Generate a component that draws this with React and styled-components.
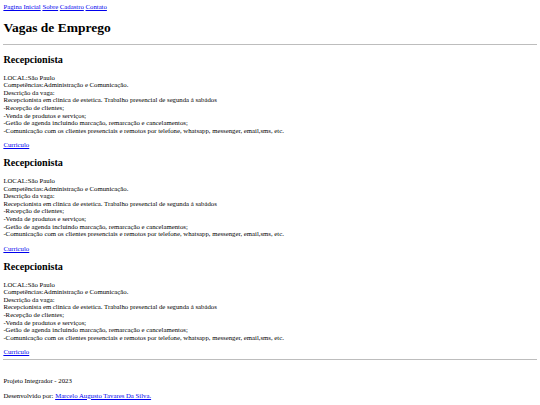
import React from "react";
import styled, { createGlobalStyle } from "styled-components";

const S = 0.421875;
const px = (v) => `${(v * S).toFixed(3)}px`;

const Global = createGlobalStyle`
  html, body { background: #fff; }
  body {
    margin: ${px(8)};
    font-family: "Liberation Serif", "Times New Roman", serif;
    font-size: ${px(16)};
    line-height: ${px(18)};
    color: #000;
  }
`;

const Nav = styled.nav`
  display: block;
`;

const Link = styled.a`
  color: #0000ee;
  text-decoration: underline;
  &:visited { color: #0000ee; }
`;

const Title = styled.h1`
  font-size: ${px(32)};
  line-height: ${px(36)};
  font-weight: bold;
  margin: ${px(21.44)} 0;
`;

const Rule = styled.hr`
  margin: ${px(8)} 0;
  border: none;
  border-top: 1px solid #bdbdbd;
  height: 0;
`;

const Job = styled.section`
  display: block;
`;

const JobTitle = styled.h2`
  font-size: ${px(24)};
  line-height: ${px(27.5)};
  font-weight: bold;
  margin: ${px(19.92)} 0;
`;

const Para = styled.p`
  margin: ${px(16)} 0;
`;

const Footer = styled.footer`
  padding-top: ${px(17)};
`;

const FooterLine = styled.p`
  margin: ${px(16)} 0;
`;

const jobs = [1, 2, 3];

export default function App() {
  return (
    <>
      <Global />
      <Nav>
        <Link href="#">Pagina Inicial</Link> <Link href="#">Sobre</Link>{" "}
        <Link href="#">Cadastro</Link> <Link href="#">Contato</Link>
      </Nav>
      <Title>Vagas de Emprego</Title>
      <Rule />
      {jobs.map((j) => (
        <Job key={j}>
          <JobTitle>Recepcionista</JobTitle>
          <Para>
            LOCAL:São Paulo
            <br />
            Competências:Administração e Comunicação.
            <br />
            Descrição da vaga:
            <br />
            Recepcionista em clinica de estetica. Trabalho presencial de segunda á sabádos
            <br />
            -Recepção de clientes;
            <br />
            -Venda de produtos e serviços;
            <br />
            -Getão de agenda incluindo marcação, remarcação e cancelamentos;
            <br />
            -Comunicação com os clientes presenciais e remotos por telefone, whatsapp, messenger, email,sms, etc.
          </Para>
          <Link href="#">Curriculo</Link>
        </Job>
      ))}
      <Rule />
      <Footer>
        <FooterLine>Projeto Integrador - 2023</FooterLine>
        <FooterLine>
          Desenvolvido por: <Link href="#">Marcelo Augusto Tavares Da Silva.</Link>
        </FooterLine>
      </Footer>
    </>
  );
}
